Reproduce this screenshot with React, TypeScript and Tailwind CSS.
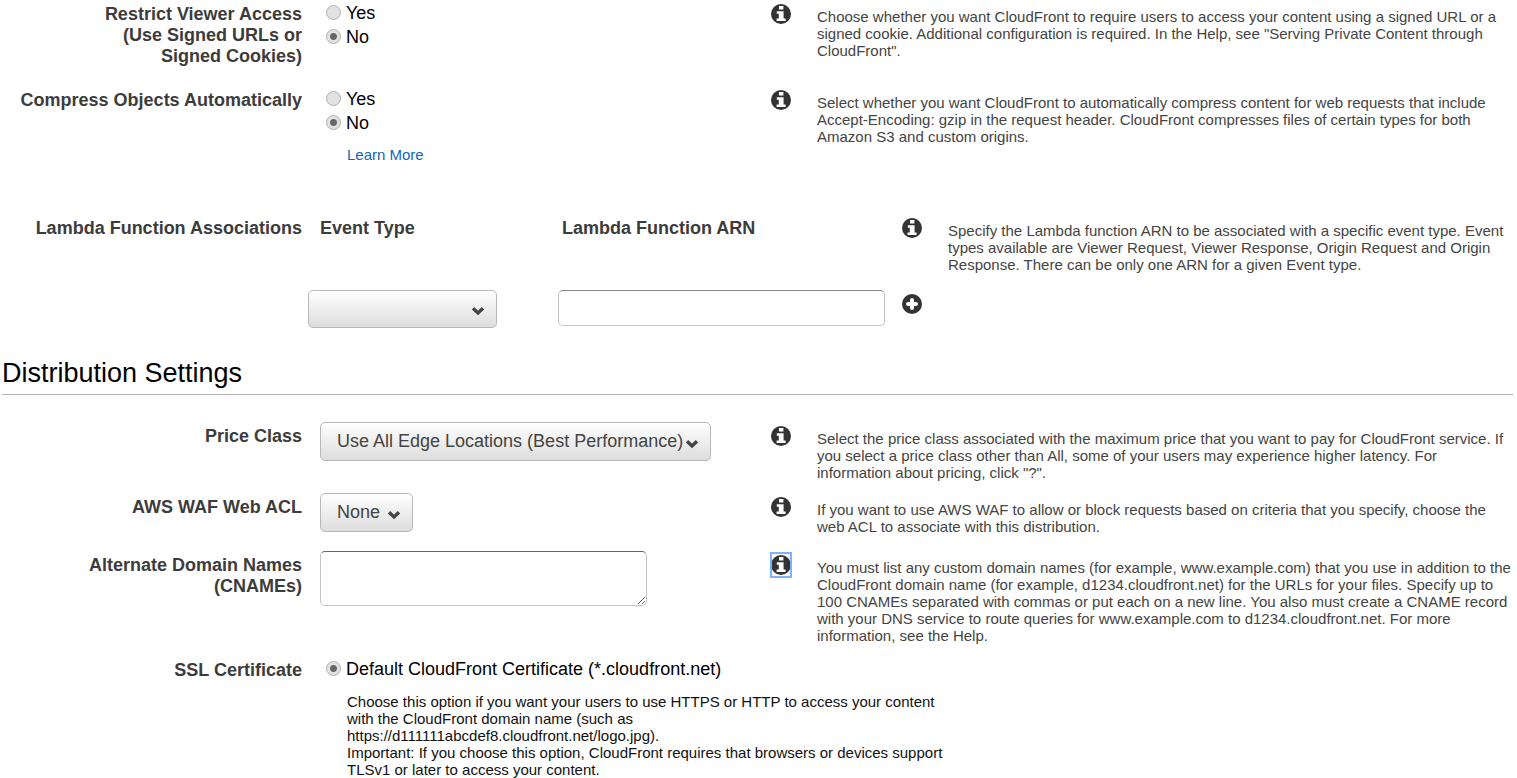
import React, { useState } from 'react';
import clsx from 'clsx';

const InfoIcon: React.FC = () => (
  <svg viewBox="0 0 20 20" className="block w-5 h-5" aria-hidden="true">
    <circle cx="10" cy="10" r="10" fill="#333333" />
    <path d="M8 2h4.4v3.4H8zM5.8 7.2h6.8v7.2h2V17H5.6v-2.6h2.2V9.8h-2z" fill="#ffffff" />
  </svg>
);

const PlusIcon: React.FC = () => (
  <svg viewBox="0 0 20 20" className="block w-5 h-5" aria-hidden="true">
    <circle cx="10" cy="10" r="10" fill="#333333" />
    <path d="M10 6v8M6 10h8" stroke="#ffffff" strokeWidth="4" strokeLinecap="round" />
  </svg>
);

interface InfoButtonProps {
  focused?: boolean;
}

const InfoButton: React.FC<InfoButtonProps> = ({ focused }) => (
  <button
    type="button"
    aria-label="Help"
    className={clsx(
      'block w-5 h-6 mt-0.5 cursor-pointer',
      focused && 'outline-2 -outline-offset-1 outline-[#7fb2fb]'
    )}
  >
    <InfoIcon />
  </button>
);

interface RowProps {
  label: string;
  htmlFor?: string;
  help: string;
  focused?: boolean;
  className?: string;
  children: React.ReactNode;
}

const Row: React.FC<RowProps> = ({ label, htmlFor, help, focused, className, children }) => (
  <div className={clsx('grid grid-cols-[302px_minmax(0,451px)_46px_minmax(0,1fr)]', className)}>
    <label htmlFor={htmlFor} className="pt-1 text-right font-bold text-[#3c3c3c] whitespace-pre-line">
      {label}
    </label>
    <div className="pl-[18px]">{children}</div>
    <div className="pl-[18px]">
      <InfoButton focused={focused} />
    </div>
    <p className="pl-[18px] pt-2 text-[15px] leading-[17px] text-[#444444]">{help}</p>
  </div>
);

interface RadioProps {
  name: string;
  label: string;
  checked: boolean;
  onChange: () => void;
}

const Radio: React.FC<RadioProps> = ({ name, label, checked, onChange }) => (
  <label className="flex items-center gap-[5px] h-6 pl-1.5 text-black">
    <input
      type="radio"
      name={name}
      checked={checked}
      onChange={onChange}
      className="appearance-none w-[15px] h-[15px] shrink-0 rounded-full border border-[#b0b0b0] bg-[#e2e2e2] checked:bg-[radial-gradient(circle,#666666_3px,#e2e2e2_4px)]"
    />
    <span className="pt-0.5">{label}</span>
  </label>
);

const YesNo: React.FC<{ name: string }> = ({ name }) => {
  const [value, setValue] = useState('No');
  return (
    <div>
      {['Yes', 'No'].map((v) => (
        <Radio key={v} name={name} label={v} checked={value === v} onChange={() => setValue(v)} />
      ))}
    </div>
  );
};

interface SelectProps {
  id: string;
  options: string[];
  className?: string;
}

const Select: React.FC<SelectProps> = ({ id, options, className }) => (
  <div className="relative w-fit">
    <select
      id={id}
      className={clsx(
        'appearance-none block pl-4 pr-[25px] rounded-[5px] border border-[#b8b8b8] bg-linear-to-b from-white to-[#dddddd] text-[#444444]',
        className
      )}
    >
      {options.map((o) => (
        <option key={o}>{o}</option>
      ))}
    </select>
    <svg
      viewBox="0 0 14 10"
      className="absolute right-3 top-1/2 -mt-[3px] w-3.5 h-2.5 pointer-events-none"
      aria-hidden="true"
    >
      <path d="M2 2.2L7 7L12 2.2" fill="none" stroke="#444444" strokeWidth="3.4" />
    </svg>
  </div>
);

const App: React.FC = () => {
  const [cert, setCert] = useState('default');

  return (
    <main className="bg-white pr-1 overflow-hidden text-lg leading-[21px] font-['Liberation_Sans',Arial,sans-serif]">
      <Row
        label={'Restrict Viewer Access\n(Use Signed URLs or\nSigned Cookies)'}
        help={'Choose whether you want CloudFront to require users to access your content using a signed URL or a signed cookie. Additional configuration is required. In the Help, see "Serving Private Content through CloudFront".'}
        className="pb-[19px]"
      >
        <YesNo name="restrict" />
      </Row>

      <Row
        label="Compress Objects Automatically"
        help="Select whether you want CloudFront to automatically compress content for web requests that include Accept-Encoding: gzip in the request header. CloudFront compresses files of certain types for both Amazon S3 and custom origins."
        className="pb-[51px]"
      >
        <YesNo name="compress" />
        <a href="#learn-more" className="block w-fit ml-[27px] mt-3 text-[15px] leading-[17px] text-[#1166bb]">
          Learn More
        </a>
      </Row>

      {/* Lambda associations: two inputs side by side, so the help column sits further right */}
      <div className="grid grid-cols-[302px_minmax(0,582px)_46px_minmax(0,1fr)]">
        <span className="pt-1 text-right font-bold text-[#3c3c3c]">Lambda Function Associations</span>
        <div className="grid grid-cols-[250px_327px] pl-1.5 font-bold text-[#3c3c3c]">
          <label htmlFor="event-type" className="pl-3 pt-1">Event Type</label>
          <label htmlFor="lambda-arn" className="pl-1 pt-1">Lambda Function ARN</label>
        </div>
        <div className="pl-[18px]">
          <InfoButton />
        </div>
        <p className="pl-[18px] pt-2 text-[15px] leading-[17px] text-[#444444]">
          Specify the Lambda function ARN to be associated with a specific event type. Event types available are Viewer
          Request, Viewer Response, Origin Request and Origin Response. There can be only one ARN for a given Event type.
        </p>
        <div className="col-start-2 grid grid-cols-[250px_327px] pl-1.5 mt-[17px]">
          <Select
            id="event-type"
            options={['', 'Viewer Request', 'Viewer Response', 'Origin Request', 'Origin Response']}
            className="w-[189px] h-[38px]"
          />
          <input
            id="lambda-arn"
            type="text"
            className="h-9 px-2 rounded-[5px] border border-[#c4c4c4] border-t-[#888888] bg-white"
          />
        </div>
        <div className="pl-[18px] mt-[21px]">
          <button type="button" aria-label="Add association" className="block cursor-pointer">
            <PlusIcon />
          </button>
        </div>
      </div>

      <h2 className="ml-0.5 mt-7 pt-px pb-[5px] border-b border-[#b0b0b0] text-[27px] leading-8 text-black">
        Distribution Settings
      </h2>

      <Row
        label="Price Class"
        htmlFor="price-class"
        help={'Select the price class associated with the maximum price that you want to pay for CloudFront service. If you select a price class other than All, some of your users may experience higher latency. For information about pricing, click "?".'}
        className="pt-[27px] pb-3"
      >
        <Select
          id="price-class"
          options={['Use All Edge Locations (Best Performance)', 'Use Only US, Canada and Europe']}
          className="h-[39px]"
        />
      </Row>

      <Row
        label="AWS WAF Web ACL"
        htmlFor="web-acl"
        help="If you want to use AWS WAF to allow or block requests based on criteria that you specify, choose the web ACL to associate with this distribution."
        className="pb-4"
      >
        <Select id="web-acl" options={['None']} className="min-w-[93px] h-[39px]" />
      </Row>

      <Row
        label={'Alternate Domain Names\n(CNAMEs)'}
        htmlFor="cnames"
        help="You must list any custom domain names (for example, www.example.com) that you use in addition to the CloudFront domain name (for example, d1234.cloudfront.net) for the URLs for your files. Specify up to 100 CNAMEs separated with commas or put each on a new line. You also must create a CNAME record with your DNS service to route queries for www.example.com to d1234.cloudfront.net. For more information, see the Help."
        focused
        className="pb-3"
      >
        <textarea
          id="cnames"
          className="block w-[327px] h-[55px] px-2 py-1 rounded-[5px] border border-[#c4c4c4] border-t-[#666666] bg-white resize"
        />
      </Row>

      <div className="grid grid-cols-[302px_minmax(0,1fr)]">
        <span className="pt-1 text-right font-bold text-[#3c3c3c]">SSL Certificate</span>
        <div className="pl-[18px]">
          <Radio
            name="certificate"
            label="Default CloudFront Certificate (*.cloudfront.net)"
            checked={cert === 'default'}
            onChange={() => setCert('default')}
          />
          <p className="ml-[27px] mt-[13px] max-w-[598px] text-[15px] leading-[17px] text-[#111111]">
            Choose this option if you want your users to use HTTPS or HTTP to access your content with the CloudFront
            domain name (such as https://d111111abcdef8.cloudfront.net/logo.jpg).
            <br />
            Important: If you choose this option, CloudFront requires that browsers or devices support TLSv1 or later to
            access your content.
          </p>
        </div>
      </div>
    </main>
  );
};

export default App;
